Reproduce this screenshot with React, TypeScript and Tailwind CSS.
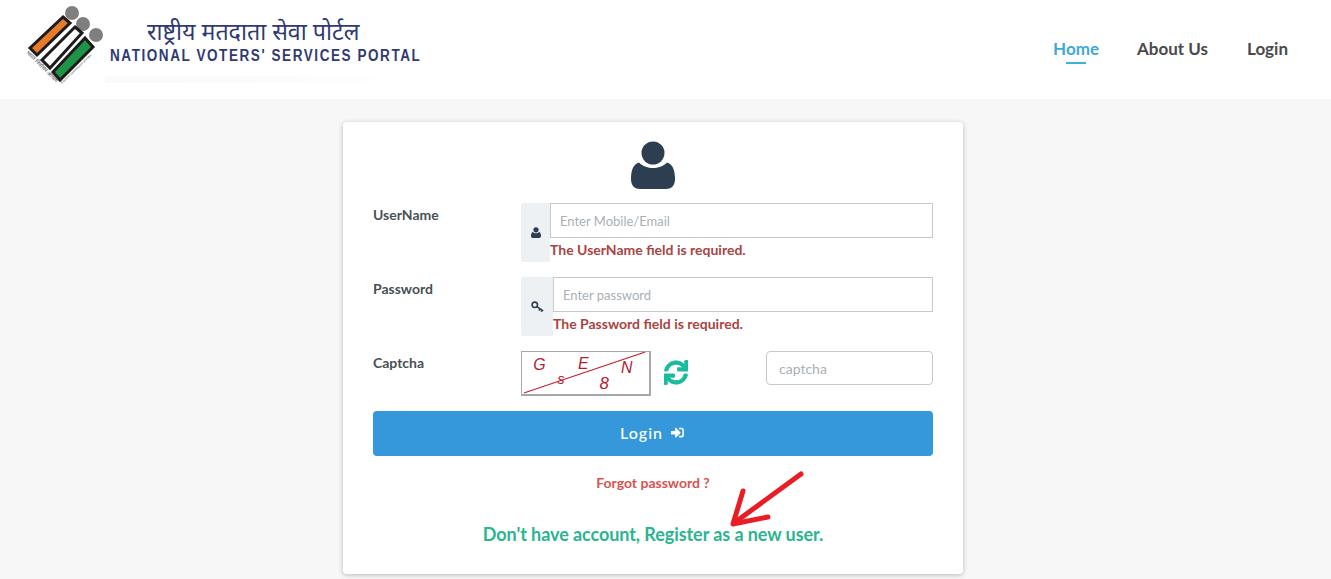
import { FaSignInAlt, FaSync } from "react-icons/fa";

function UserIcon({ className }: { className: string }) {
  return (
    <svg viewBox="0 0 44 48" className={className} fill="currentColor">
      <circle cx="22" cy="12" r="11.5" />
      <path d="M8 21.500C12 25.500 17 27 22 27s10-1.500 14-5.500C41 23 44 28 44 38c0 7-4 10-9 10H9c-5 0-9-3-9-10 0-10 3-15 8-16.500z" />
    </svg>
  );
}

function KeyIcon() {
  return (
    <svg viewBox="0 0 13 12" className="w-[13px] h-[12px] text-[#2c3e50]" fill="none" stroke="currentColor">
      <circle cx="3.8" cy="3.800" r="2.700" strokeWidth="1.600" />
      <path d="M5.800 5.600l6.400 4.200M9 7.700L8 9.600M11 9L10.200 10.800" strokeWidth="1.500" />
    </svg>
  );
}

function Logo() {
  return (
    <svg viewBox="0 0 105 90" className="w-[105px] h-[90px] shrink-0">
      <circle cx="72" cy="13" r="7" fill="#7f7f7f" />
      <circle cx="83" cy="24" r="7" fill="#7f7f7f" />
      <circle cx="96" cy="35" r="7" fill="#7f7f7f" />
      <path d="M63 17l7 6-33 32-7-7z" fill="#e87b2a" stroke="#1c1c1c" strokeWidth="3" />
      <path d="M75 27l7 6-32 35-8-8z" fill="#fff" stroke="#1c1c1c" strokeWidth="3" />
      <path d="M85 38l8 9-33 33-7-8z" fill="#1f9447" stroke="#1c1c1c" strokeWidth="3" />
      <text x="26" y="53" fontSize="5.500" fill="#444" transform="rotate(45 26 53)" fontFamily="Noto Sans, DejaVu Sans, sans-serif">भारत निर्वाचन आयोग</text>
      <text x="62" y="84" fontSize="3.200" fill="#444" transform="rotate(-44 62 84)" fontFamily="Liberation Sans, sans-serif">Election Commission of India</text>
    </svg>
  );
}

function Captcha() {
  return (
    <svg viewBox="0 0 130 45" className="w-[130px] h-[45px] shrink-0 border-t border-l border-r-2 border-b-2 border-[#a8a8a8]">
      <g fill="#b32034" fontFamily="Liberation Sans, sans-serif" fontStyle="italic">
        <text x="9" y="19" fontSize="17">G</text>
        <text x="57" y="18" fontSize="17">E</text>
        <text x="103" y="23" fontSize="17">N</text>
        <text x="35" y="34" fontSize="15">s</text>
        <text x="80" y="40" fontSize="18">8</text>
      </g>
      <path d="M-1 44L129 0" stroke="#c4202f" strokeWidth="1.200" />
    </svg>
  );
}

function RedArrow() {
  return (
    <svg viewBox="0 0 80 60" className="absolute left-[728px] top-[470px] w-[80px] h-[60px]" fill="none" stroke="#ea1c24" strokeWidth="5" strokeLinecap="round" strokeLinejoin="round">
      <path d="M73 4L6 53" />
      <path d="M15 21L5 54l35-7" />
    </svg>
  );
}

function Row({ label, children }: { label: string; children: React.ReactNode }) {
  return (
    <div className="flex">
      <label className="w-[148px] shrink-0 text-[14px] leading-5 font-bold text-[#4a4f55] pt-[2px]">{label}</label>
      {children}
    </div>
  );
}

function InputGroup({ icon, addon, placeholder, error }: { icon: React.ReactNode; addon: string; placeholder: string; error: string }) {
  return (
    <div className="flex flex-1">
      <div className={`${addon} h-[59px] shrink-0 bg-[#eef1f3] rounded-l-[2px] flex items-center justify-center`}>
        {icon}
      </div>
      <div className="flex-1">
        <div className="h-[35px] border border-[#c8c8c8] px-[9px] pt-[2px] flex items-center text-[13px] text-[#a9b0b6] bg-white">
          {placeholder}
        </div>
        <p className="text-[14px] leading-6 font-bold text-[#a94442]">{error}</p>
      </div>
    </div>
  );
}

export default function App() {
  return (
    <div className="relative h-[579px] overflow-hidden bg-[#f7f7f7] font-['Lato',sans-serif]">
      <header className="h-[99px] bg-white flex items-center justify-between pr-[43px]">
        <div className="flex items-start h-[90px] -mt-[9px]">
          <Logo />
          <div className="flex flex-col items-start w-[316px] pt-[17px]">
            <span className="ml-[42px] text-[23.200px] leading-7 text-[#2f3a72] whitespace-nowrap font-['Noto_Sans','DejaVu_Sans',sans-serif]">राष्ट्रीय मतदाता सेवा पोर्टल</span>
            <span className="mt-[1px] ml-[5px] origin-left scale-x-[0.845] text-[16px] leading-5 font-bold tracking-[1.85px] whitespace-nowrap text-[#2f3a72] font-['Liberation_Sans',sans-serif]">NATIONAL VOTERS' SERVICES PORTAL</span>
            <div className="mt-[10px] h-[7px] w-[300px] bg-gradient-to-r from-[#fafafa] via-[#fbfbfb] to-white" />
          </div>
        </div>
        <nav className="flex items-center gap-[39px] text-[17px] font-bold text-[#4a4a4a] -mt-[2px]">
          <a className="text-[#3fa9d8] relative -mr-[1px]">
            Home
            <span className="absolute left-[13px] right-[13px] -bottom-[3px] h-[2px] bg-[#3fb0d8]" />
          </a>
          <a>About Us</a>
          <a>Login</a>
        </nav>
      </header>

      <main className="w-[620px] h-[452px] mt-[23px] ml-[343px] bg-white rounded-[4px] shadow-[0_1px_5px_rgba(0,0,0,0.25)] px-[30px] pt-[19px]">
        <div className="flex justify-center">
          <UserIcon className="w-[44px] h-[48px] text-[#2c3e50]" />
        </div>
        <div className="mt-[14px] flex flex-col gap-[15px]">
          <Row label="UserName">
            <InputGroup icon={<UserIcon className="w-[10px] h-[11px] text-[#2c3e50]" />} addon="w-[29px]" placeholder="Enter Mobile/Email" error="The UserName field is required." />
          </Row>
          <Row label="Password">
            <InputGroup icon={<KeyIcon />} addon="w-[32px]" placeholder="Enter password" error="The Password field is required." />
          </Row>
          <Row label="Captcha">
            <div className="flex flex-1 items-start">
              <Captcha />
              <FaSync className="w-[24px] h-[25px] ml-[13px] mt-[9px] text-[#1abc9c]" stroke="currentColor" strokeWidth={20} />
              <div className="ml-auto w-[167px] h-[34px] border border-[#c8c8c8] rounded-[4px] px-[12px] flex items-center text-[14px] text-[#a9b0b6]">captcha</div>
            </div>
          </Row>
        </div>
        <button className="mt-[15px] w-full h-[45px] bg-[#3498db] rounded-[4px] text-white text-[16px] tracking-[1px] font-medium flex items-center justify-center gap-[8px] pb-[2px] pr-[2px]">
          Login <FaSignInAlt className="w-[13px] h-[13px]" />
        </button>
        <p className="mt-[17px] text-center text-[14px] leading-5 font-bold text-[#d9534f]">Forgot password ?</p>
        <p className="mt-[29px] text-center text-[18px] tracking-[-0.07px] leading-6 font-bold text-[#2bb48f]">Don't have account, Register as a new user.</p>
      </main>
      <RedArrow />
    </div>
  );
}
